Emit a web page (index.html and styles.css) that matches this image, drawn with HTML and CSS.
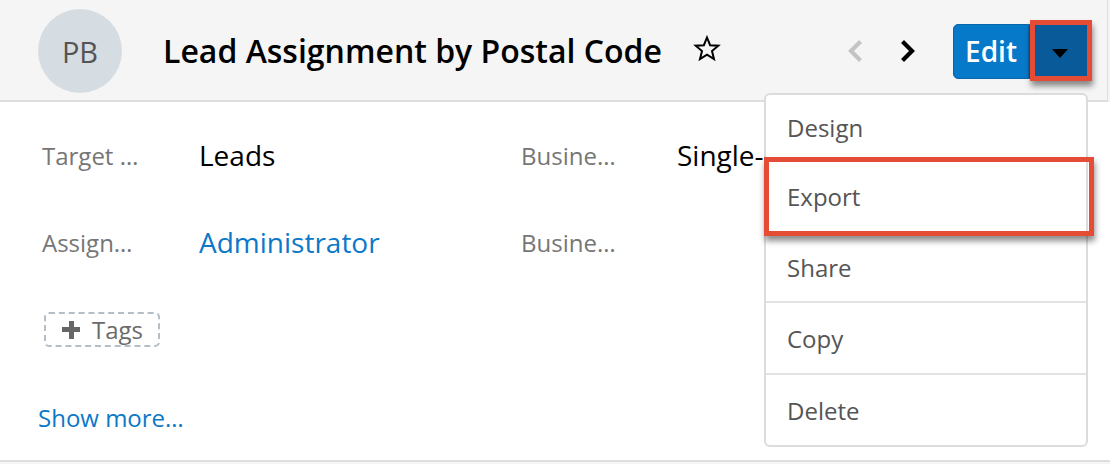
FILE: index.html
```html
<!DOCTYPE html>
<html lang="en">
<head>
<meta charset="utf-8">
<title>Lead Assignment by Postal Code</title>
<link rel="stylesheet" href="styles.css">
</head>
<body>
<div class="record">
  <header class="rec-header">
    <div class="avatar">PB</div>
    <h1 class="title">Lead Assignment by Postal Code</h1>
    <span class="star">
      <svg width="28" height="28" viewBox="0 0 28 28"><path d="M14 2.5 L17.1 10.2 L25.3 10.7 L19 16 L21 24.1 L14 19.6 L7 24.1 L9 16 L2.7 10.7 L10.9 10.2 Z" fill="none" stroke="#000" stroke-width="2" stroke-linejoin="miter"/></svg>
    </span>
    <div class="spacer"></div>
    <nav class="pager">
      <svg class="chev" width="16" height="22" viewBox="0 0 16 22"><polyline points="12,3 4,11 12,19" fill="none" stroke="#c4c4c4" stroke-width="4.2" stroke-linecap="square"/></svg>
      <svg class="chev" width="16" height="22" viewBox="0 0 16 22"><polyline points="4,3 12,11 4,19" fill="none" stroke="#000" stroke-width="4.2" stroke-linecap="square"/></svg>
    </nav>
    <div class="btn-group">
      <button class="btn-edit">Edit</button>
      <button class="btn-caret"><span class="caret"></span></button>
    </div>
  </header>
  <section class="rec-body">
    <div class="fields">
      <div class="label">Target …</div>
      <div class="value">Leads</div>
      <div class="label">Busine…</div>
      <div class="value">Single-Use</div>
      <div class="label">Assign…</div>
      <div class="value link">Administrator</div>
      <div class="label">Busine…</div>
      <div class="value"></div>
    </div>
    <div class="tags"><span class="plus"></span>Tags</div>
    <a class="show-more">Show more…</a>
  </section>
</div>

<ul class="menu">
  <li class="m-design">Design</li>
  <li class="m-export">Export</li>
  <li class="m-share">Share</li>
  <li class="m-copy">Copy</li>
  <li class="m-delete">Delete</li>
</ul>

<div class="mark mark-caret"></div>
<div class="mark mark-export"></div>
</body>
</html>
```

FILE: styles.css
```css
* { box-sizing: border-box; }
html, body { margin: 0; padding: 0; }
body {
  font-family: "Open Sans", "Noto Sans", sans-serif;
  background: #f5f5f5;
  width: 1110px;
  height: 464px;
  overflow: hidden;
  position: relative;
}

.record { width: 1110px; }

.rec-header {
  width: 1108px;
  height: 102px;
  background: #f5f5f5;
  border-bottom: 2px solid #dedede;
  border-right: 1px solid #dedede;
  display: flex;
  align-items: center;
  padding-left: 38px;
}
.avatar {
  width: 84px;
  height: 84px;
  border-radius: 50%;
  background: #d6dde2;
  color: #545454;
  font-size: 29px;
  display: flex;
  align-items: center;
  justify-content: center;
  margin-top: 2px;
  flex: none;
}
.title {
  margin: 0 0 0 41px;
  font-size: 32px;
  font-weight: 600;
  color: #000;
  white-space: nowrap;
}
.star {
  margin-left: 31px;
  display: flex;
  margin-top: -2px;
}
.spacer { flex: 1; }
.pager {
  display: flex;
  gap: 37px;
  margin-right: 37px;
  margin-top: 2px;
}
.chev { display: block; }
.btn-group {
  display: flex;
  margin-right: 16px;
  height: 55px;
  margin-top: 2px;
}
.btn-edit {
  font-family: inherit;
  font-size: 28px;
  font-weight: 600;
  color: #fff;
  background: #0679c9;
  border: 1px solid #0a66ab;
  border-radius: 5px 0 0 5px;
  width: 76px;
  padding: 0;
  line-height: 1;
}
.btn-caret {
  width: 62px;
  background: #085a98;
  border: none;
  border-radius: 0 5px 5px 0;
  display: flex;
  align-items: center;
  justify-content: center;
  padding: 0;
}
.caret {
  width: 0;
  height: 0;
  border-left: 8px solid transparent;
  border-right: 8px solid transparent;
  border-top: 9px solid #000;
  margin-top: 4px;
}

.rec-body {
  background: #fff;
  height: 360px;
  border-bottom: 2px solid #dedede;
  padding: 27px 0 0 0;
}
.fields {
  display: grid;
  grid-template-columns: 157px 322px 156px 1fr;
  grid-auto-rows: 52px;
  row-gap: 35px;
  padding-left: 42px;
  align-items: center;
}
.label {
  font-size: 24px;
  color: #767676;
  white-space: nowrap;
}
.value {
  font-size: 28px;
  color: #000;
  white-space: nowrap;
}
.value.link { color: #0b78c8; }

.tags {
  margin: 44px 0 0 44px;
  width: 116px;
  height: 35px;
  border: 2px dashed #b3bec6;
  border-radius: 5px;
  display: flex;
  align-items: center;
  font-size: 24px;
  color: #6b6b6b;
  padding-left: 16px;
}
.plus {
  position: relative;
  width: 18px;
  height: 18px;
  margin-right: 12px;
  flex: none;
}
.plus::before, .plus::after {
  content: "";
  position: absolute;
  background: #666;
}
.plus::before { left: 0; right: 0; top: 6.5px; height: 5px; }
.plus::after { top: 0; bottom: 0; left: 6.5px; width: 5px; }

.show-more {
  display: block;
  margin: 54px 0 0 38px;
  font-size: 24px;
  color: #0b78c8;
  line-height: 34px;
}

.menu {
  position: absolute;
  left: 764px;
  top: 93px;
  width: 324px;
  height: 354px;
  margin: 0;
  padding: 0;
  list-style: none;
  background: #fff;
  border: 2px solid #dcdcdc;
  border-radius: 6px;
}
.menu li {
  display: flex;
  align-items: center;
  padding-left: 21px;
  font-size: 24px;
  color: #555;
}
.menu li + li { border-top: 2px solid #e3e3e3; }
.menu .m-design { height: 64px; }
.menu .m-export { height: 72px; }
.menu .m-share { height: 70px; }
.menu .m-copy { height: 72px; }
.menu .m-delete { height: 72px; }

.mark {
  position: absolute;
  border: 5px solid #e44c36;
  box-shadow: 1px 5px 6px rgba(0,0,0,0.45);
}
.mark-caret {
  left: 1030px;
  top: 20px;
  width: 62px;
  height: 61px;
}
.mark-export {
  left: 764px;
  top: 157px;
  width: 330px;
  height: 79px;
}
```
